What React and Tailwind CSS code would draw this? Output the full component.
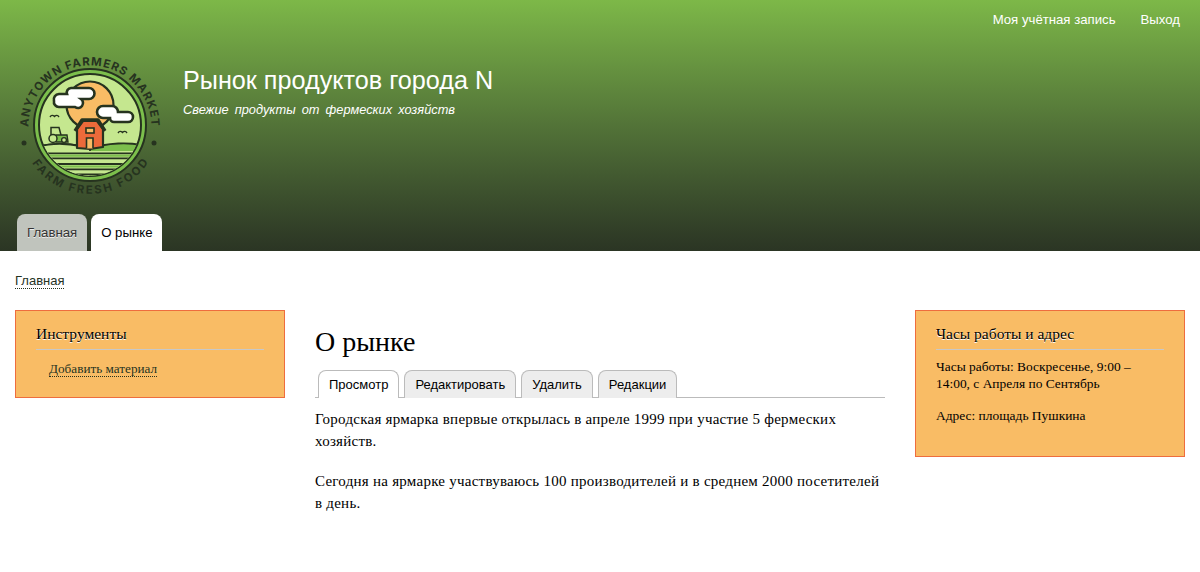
const INK = '#26331f'

const Logo = () => (
  <svg width="150" height="150" viewBox="0 0 150 150" className="block">
    <defs>
      <path id="topArc" d="M 13.5 77 A 61.5 61.5 0 1 1 136.5 77" />
      <path id="botArc" d="M 17 113 A 70 70 0 0 0 133 113" />
      <clipPath id="inner"><circle cx="75" cy="75" r="50.5" /></clipPath>
    </defs>
    <text fill={INK} fontFamily="Inter, sans-serif" fontWeight="700" fontSize="11.4">
      <textPath href="#topArc" textLength="192" lengthAdjust="spacing">ANYTOWN FARMERS MARKET</textPath>
    </text>
    <text fill={INK} fontFamily="Inter, sans-serif" fontWeight="700" fontSize="11.4">
      <textPath href="#botArc" textLength="137" lengthAdjust="spacing">FARM FRESH FOOD</textPath>
    </text>
    <circle cx="9" cy="93" r="2.5" fill={INK} />
    <circle cx="139" cy="93" r="2.5" fill={INK} />
    <circle cx="75" cy="75" r="56" fill="#7cbf4c" stroke={INK} strokeWidth="2" />
    <circle cx="75" cy="75" r="51" fill="#c5e78f" stroke={INK} strokeWidth="2" />
    <g clipPath="url(#inner)">
      <circle cx="75" cy="55" r="23.5" fill="#f9bc65" stroke={INK} strokeWidth="2.2" />
      {/* hills */}
      <path d="M20 98 C 35 92 60 93 75 99 C 90 93 115 91 135 97 V 130 H 20 Z" fill="#7cbf4c" stroke={INK} strokeWidth="1.8" />
      <path d="M20 98 C 35 92 60 93 75 99 V 130 H 20 Z" fill="#c5e78f" stroke={INK} strokeWidth="1.8" />
      <rect x="20" y="101" width="110" height="29" fill="#c5e78f" />
      <path d="M20 103.3H130M20 108.3H130M20 114H130M20 119.3H130M20 124.3H130" stroke={INK} strokeWidth="1.8" />
      <path d="M20 105.8H130M20 116.6H130" stroke="#7cbf4c" strokeWidth="2" />
    </g>
    {/* barn */}
    <path d="M62 98 V79 L68 71 H82 L88 79 V97 L75 99 Z" fill="#ec6a3a" stroke={INK} strokeWidth="2.2" strokeLinejoin="round" />
    <path d="M60 81 L67 70 H83 L90 81" fill="none" stroke={INK} strokeWidth="3.4" strokeLinejoin="round" />
    <rect x="71" y="78" width="8" height="5" fill="#f9bc65" stroke={INK} strokeWidth="1.6" />
    <path d="M71.5 98.5 V88 H78 V98.5" fill="#f9bc65" stroke={INK} strokeWidth="1.6" />
    {/* clouds */}
    <path d="M39 51 A5.5 5.5 0 0 1 44 44 H52 A4.5 4.5 0 0 1 56 38 H74 A5.5 5.5 0 0 1 74 49 H66 A5 5 0 0 1 60 57 H44 A5 5 0 0 1 39 51Z" fill="#fff" stroke={INK} strokeWidth="2.6" />
    <path d="M82 62 A6 6 0 0 1 88 56 H97 A6 6 0 0 1 103 62 H113 A5 5 0 0 1 113 72 H99 A4 4 0 0 1 95 68 H88 A6 6 0 0 1 82 62Z" fill="#fff" stroke={INK} strokeWidth="2.6" />
    {/* birds */}
    <path d="M35 67 Q37 64 39.5 66.5 Q42 64 44 67" fill="none" stroke={INK} strokeWidth="1.4" />
    <path d="M103 83 Q105 80 107.5 82.5 Q110 80 112 83" fill="none" stroke={INK} strokeWidth="1.4" />
    {/* tractor */}
    <path d="M36 85 V77.5 H44 L46 85" fill="#c5e78f" stroke={INK} strokeWidth="1.5" />
    <path d="M41 85 H52 L53 92 H41 Z" fill="#7cbf4c" stroke={INK} strokeWidth="1.4" />
    <circle cx="38" cy="88.5" r="4" fill="#c5e78f" stroke={INK} strokeWidth="1.5" />
    <circle cx="49" cy="90" r="2.4" fill="#c5e78f" stroke={INK} strokeWidth="1.3" />
  </svg>
)

const sans = "font-['Liberation_Sans',Arial,sans-serif]"
const dotted = 'border-b border-dotted border-[#26331f]'

const Block = ({ title, className, children }) => (
  <div className={`border border-[#ee6d3e] bg-[#f9bc65] px-5 ${className}`}>
    <h2 className="border-b border-[#c8c8c8] pb-[5px] pt-[13px] text-[15.5px] leading-[20px] text-black [text-shadow:0_1px_0_#fff]">{title}</h2>
    {children}
  </div>
)

const tabCls = 'h-[28px] rounded-t-[8px] border border-[#bbb] border-b-0 bg-[#ededed] px-[10px] pt-[5px] text-[13px] leading-[17px] text-black'

export default function App() {
  return (
    <div className="min-h-[572px] bg-white font-['Liberation_Serif','Times_New_Roman',serif] text-black">
      <header className={`h-[251px] bg-gradient-to-b from-[#7db848] to-[#2b3524] ${sans}`}>
        <nav className="flex justify-end gap-[25px] pr-[20px] pt-[12px] text-[13.2px] leading-[16px] text-white">
          <span>Моя учётная запись</span>
          <span>Выход</span>
        </nav>
        <div className="flex pl-[15px] pt-[22px]">
          <Logo />
          <div className="pl-[18px] pt-[15px] text-white">
            <h1 className="text-[25.2px] leading-[30px]">Рынок продуктов города N</h1>
            <p className="mt-[7px] text-[12.8px] italic leading-[16px] [word-spacing:2.5px]">Свежие продукты от фермеских хозяйств</p>
          </div>
        </div>
        <div className="mt-[14px] flex gap-[4px] pl-[17px] text-[13.2px] leading-[17px]">
          <span className="h-[37px] rounded-t-[8px] bg-[#c0c4bd] px-[10px] pt-[10px] text-[#333] [text-shadow:0_1px_#eee]">Главная</span>
          <span className="h-[37px] rounded-t-[8px] bg-white px-[10px] pt-[10px] text-black">О рынке</span>
        </div>
      </header>

      <div className="px-[15px]">
        <div className={`pt-[22px] text-[13px] leading-[15px] text-[#26331f] ${sans}`}>
          <span className={dotted}>Главная</span>
        </div>
        <div className="mt-[22px] flex items-start gap-[30px]">
          <Block title="Инструменты" className="h-[88px] w-[270px]">
            <div className="pl-[13px] pt-[11px] text-[13.2px] leading-[15px] text-[#26331f]">
              <span className={dotted}>Добавить материал</span>
            </div>
          </Block>

          <main className="w-[570px]">
            <h1 className="pt-[16px] text-[28px] leading-[32px]">О рынке</h1>
            <div className={`mt-[12px] flex h-[28px] gap-[5px] border-b border-[#bbb] pl-[3px] ${sans}`}>
              <span className={`${tabCls} !bg-white`}>Просмотр</span>
              <span className={tabCls}>Редактировать</span>
              <span className={tabCls}>Удалить</span>
              <span className={tabCls}>Редакции</span>
            </div>
            <div className="pt-[10px] text-[15px] leading-[22px] tracking-[0.25px]">
              <p>Городская ярмарка впервые открылась в апреле 1999 при участие 5 фермеских хозяйств.</p>
              <p className="mt-[18px]">Сегодня на ярмарке участвуваюсь 100 производителей и в среднем 2000 посетителей в день.</p>
            </div>
          </main>

          <Block title="Часы работы и адрес" className="h-[147px] w-[270px]">
            <div className="pt-[8px] text-[13.45px] leading-[17px] text-black">
              <p>Часы работы: Воскресенье, 9:00 – 14:00, с Апреля по Сентябрь</p>
              <p className="mt-[15px]">Адрес: площадь Пушкина</p>
            </div>
          </Block>
        </div>
      </div>
    </div>
  )
}
